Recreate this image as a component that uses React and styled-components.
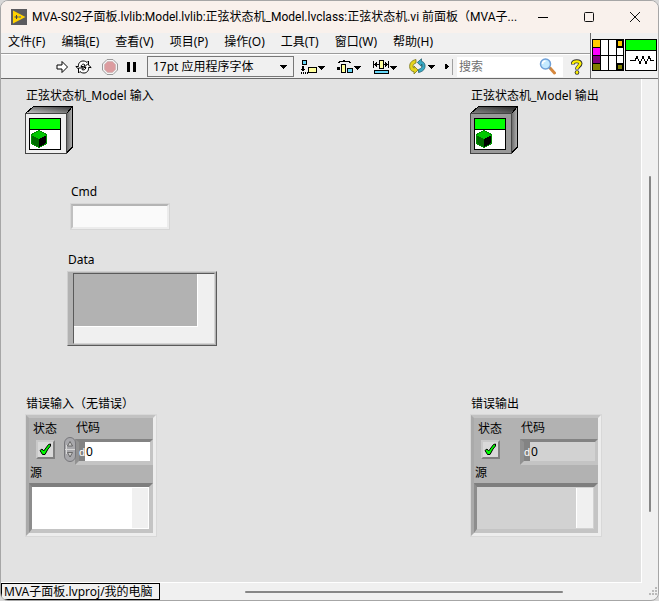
import React from "react";
import styled, { createGlobalStyle } from "styled-components";

const GlobalStyle = createGlobalStyle`
  *, *::before, *::after { box-sizing: border-box; }
  body { margin: 0; background: #d8d8d8; }
  body, button, input, select, textarea {
    font-family: "Noto Sans", "Noto Sans CJK SC", sans-serif;
    font-size: 12px;
    line-height: 18px;
    color: #000;
  }
  svg { display: block; flex: none; }
`;

/* ---------- window frame ---------- */

const Window = styled.div`
  display: flex;
  flex-direction: column;
  min-height: 100vh;
  border: 1px solid #a6a6a6;
  border-radius: 8px;
  background: #f0f0f0;
  overflow: hidden;
`;

const TitleBar = styled.header`
  display: flex;
  align-items: center;
  height: 32px;
  padding-left: 10px;
  background: #f9f1ec;
`;

const Title = styled.h1`
  flex: 1;
  min-width: 0;
  margin: 0 0 0 5px;
  font-family: Roboto, "Noto Sans CJK SC", sans-serif;
  font-size: 12px;
  font-weight: 400;
  white-space: nowrap;
  overflow: hidden;
`;

const CaptionButton = styled.button`
  display: flex;
  align-items: center;
  justify-content: center;
  width: 46px;
  height: 32px;
  padding: 0;
  border: 0;
  background: none;
`;

const Chrome = styled.div`
  display: flex;
  border-bottom: 1px solid #6a6a6a;
`;

const Bars = styled.div`
  flex: 1;
  min-width: 0;
`;

const MenuBar = styled.nav`
  display: flex;
  align-items: center;
  gap: 16px;
  height: 21px;
  padding: 0 7px 3px;
  border-bottom: 1px solid #9c9c9c;
`;

const MenuItem = styled.button`
  padding: 0;
  border: 0;
  background: none;
  white-space: nowrap;
`;

const ToolBar = styled.div`
  display: flex;
  align-items: center;
  height: 24px;
  padding-left: 54px;
  border-top: 1px solid #fff;
`;

const ToolButton = styled.button`
  display: flex;
  align-items: center;
  justify-content: center;
  flex: none;
  width: ${(p) => p.$width}px;
  height: 22px;
  padding: 0;
  border: 0;
  background: none;
`;

const FontBox = styled.div`
  display: grid;
  align-items: center;
  flex: none;
  width: 147px;
  height: 21px;
  margin: 0 3px 0 6px;
  border: 1px solid #777;
  background: #f0f0f0;

  > * { grid-area: 1 / 1; }
  > svg { justify-self: end; margin-right: 6px; pointer-events: none; }
`;

const FontSelect = styled.select`
  appearance: none;
  width: 100%;
  height: 19px;
  padding: 0 0 0 5px;
  border: 0;
  background: none;
`;

const Divider = styled.span`
  width: 1px;
  height: 16px;
  margin: 0 4px 0 1px;
  background: #a0a0a0;
`;

const SearchBox = styled.label`
  display: flex;
  align-items: center;
  flex: 1;
  min-width: 60px;
  height: 20px;
  padding: 0 6px 0 2px;
  background: #fff;
`;

const SearchInput = styled.input`
  flex: 1;
  min-width: 0;
  padding: 0;
  border: 0;
  outline: 0;
  background: none;
  &::placeholder { color: #6f6f6f; opacity: 1; }
`;

const IconPane = styled.div`
  display: flex;
  align-items: flex-end;
  gap: 1px;
  padding: 0 1px 7px 1px;
  border-left: 1px solid #6a6a6a;
`;

/* ---------- front panel ---------- */

const Workspace = styled.main`
  flex: 1;
  display: grid;
  grid-template-columns: 1fr 16px;
`;

const Canvas = styled.section`
  display: grid;
  grid-template-columns: 1fr 132px;
  align-content: start;
  padding: 8px 39px 24px 24px;
  border-right: 1px solid #fff;
  border-bottom: 1px solid #fff;
  background: #e2e2e2;
`;

const Item = styled.div`
  display: flex;
  flex-direction: column;
  align-items: flex-start;
  gap: ${(p) => p.$gap || 1}px;
  margin-top: ${(p) => p.$top || 0}px;
  margin-left: ${(p) => p.$indent || 0}px;
  grid-column: ${(p) => (p.$wide ? "1 / -1" : "auto")};
`;

const Caption = styled.label`
  padding-left: 1px;
  height: 18px;
  white-space: nowrap;
`;

const CmdInput = styled.input`
  width: 100px;
  height: 27px;
  padding: 0 4px;
  border: 3px solid;
  border-color: #b4b4b4 #ececec #ececec #c0c0c0;
  outline: 1px solid #d6d6d6;
  outline-offset: -1px;
  background: #fafafa;
`;

const DataFrame = styled.div`
  width: 150px;
  height: 75px;
  padding: 1px 1px 1px 5px;
  border: 1px solid;
  border-color: #cfcfcf #5a5a5a #5a5a5a #cfcfcf;
  background: #b2b2b2;
`;

const DataView = styled.div`
  height: 100%;
  padding: 0 16px 16px 0;
  border: 1px solid;
  border-color: #5a5a5a #d4d4d4 #d4d4d4 #5a5a5a;
  background: #f0f0f0;
`;

const DataArea = styled.div`
  height: 100%;
  border-right: 1px solid #fff;
  border-bottom: 1px solid #fff;
  background: #b2b2b2;
`;

const ClusterFrame = styled.fieldset`
  width: 132px;
  height: 123px;
  min-width: 0;
  margin: 0;
  padding: 0;
  border: 4px solid;
  border-color: #c2c2c2 #ededed #ededed #aaa;
  outline: 1px solid #d8d8d8;
  outline-offset: -1px;
  background: #b2b2b2;
`;

const ClusterRow = styled.div`
  display: flex;
  height: 48px;
  padding: 1px 0 0 4px;
`;

const StatusColumn = styled.div`
  display: flex;
  flex-direction: column;
  gap: 2px;
  width: 42px;
`;

const StatusLabel = styled.label`
  height: 18px;
  padding-top: 1px;
  white-space: nowrap;
`;

const CheckCell = styled.span`
  display: grid;
  place-items: center;
  width: 19px;
  height: 19px;
  margin: 1px 0 0 3px;

  > * { grid-area: 1 / 1; }
  > svg { pointer-events: none; }
`;

const CheckInput = styled.input`
  appearance: none;
  width: 19px;
  height: 19px;
  margin: 0;
  border: 2px solid;
  border-color: #c9c9c9 #808080 #808080 #c9c9c9;
  background: #d9d9d9;
`;

const CodeColumn = styled.div`
  display: flex;
  flex-direction: column;
  flex: 1;
  min-width: 0;
  gap: 2px;
`;

const CodeField = styled.div`
  display: flex;
  height: 26px;
  border: 4px solid;
  border-top-width: 3px;
  border-right-width: 3px;
  border-color: #838383 #c4c4c4 #c4c4c4 #919191;
`;

const Radix = styled.span`
  width: 6px;
  background: #838383;
  color: #fff;
  font-family: "Liberation Sans", sans-serif;
  font-size: 11px;
  line-height: 20px;
`;

const CodeInput = styled.input`
  flex: 1;
  min-width: 0;
  padding: 0 1px;
  border: 0;
  background: ${(p) => (p.$output ? "#d2d2d2" : "#fff")};
`;

const SpinColumn = styled.div`
  display: flex;
  align-items: flex-end;
  width: 13px;
  margin: 0 -2px 4px -11px;
  z-index: 1;
`;

const SpinButton = styled.button`
  width: 12px;
  height: 25px;
  padding: 0;
  border: 0;
  background: none;
`;

const SourceLabel = styled.label`
  display: block;
  height: 17px;
  padding-left: 1px;
  line-height: 14px;
`;

const SourceFrame = styled.div`
  display: flex;
  height: 50px;
  border: 4px solid;
  border-left-width: 3px;
  border-color: #7e7e7e #c4c4c4 #c4c4c4 #8d8d8d;
  background: ${(p) => (p.$output ? "#d2d2d2" : "#fff")};
`;

const SourceText = styled.textarea`
  flex: 1;
  min-width: 0;
  padding: 2px;
  border: 0;
  resize: none;
  background: none;
`;

const SourceScroll = styled.span`
  width: 17px;
  margin: 1px 1px 1px 0;
  border-left: 1px solid #fff;
  background: #f0f0f0;
`;

/* ---------- scroll bars and status ---------- */

const VerticalTrack = styled.div`
  display: flex;
  justify-content: center;
  padding: 97px 0 71px;
`;

const VerticalThumb = styled.span`
  width: 2px;
  border-radius: 1px;
  background: #868686;
`;

const Footer = styled.footer`
  display: flex;
  align-items: center;
  height: 17px;
`;

const ProjectLink = styled.button`
  width: 159px;
  height: 17px;
  padding: 0 2px;
  border: 1px solid #000;
  background: #f0f0f0;
  line-height: 14px;
  text-align: left;
  white-space: nowrap;
`;

const HorizontalTrack = styled.div`
  flex: 1;
  padding: 0 86px 0 85px;
`;

const HorizontalThumb = styled.span`
  display: block;
  height: 2px;
  border-radius: 1px;
  background: #868686;
`;

/* ---------- drawings ---------- */

const Pixels = ({ w, h, children }) => (
  <svg width={w} height={h} viewBox={`0 0 ${w} ${h}`} shapeRendering="crispEdges" aria-hidden="true">
    {children}
  </svg>
);

const AppIcon = () => (
  <svg width="16" height="16" viewBox="0 0 16 16" aria-hidden="true">
    <path fill="#5b5b5f" d="M0 0h16v16H0z" />
    <path fill="#ffd200" d="M2 1.5 14.5 8 2 14.5z" />
    <path stroke="#444" d="M3.5 8h4M5.5 6v4" />
    <path stroke="#2b63b8" d="M8 8h2" />
  </svg>
);

const RunIcon = () => (
  <svg width="13" height="14" viewBox="0 0 13 14" aria-hidden="true">
    <path fill="#fff" stroke="#000" d="M1 5h5V1.500L11.500 7 6 12.500V9H1z" />
  </svg>
);

const RunLoopIcon = () => (
  <svg width="17" height="14" viewBox="0 0 17 14" fill="#fff" stroke="#000" aria-hidden="true">
    <path d="M3.500 6.500C3 3 5.500 1 8 1c2 0 3 .5 4 1.500L13.500 1v6H8.500L10 5C9 3.500 6.500 4 6 6.500h2L4.500 10 .8 6.500z" />
    <path d="M13.500 7.500C14 11 11.500 13 9 13c-2 0-3-.5-4-1.500L3.500 13V8H8.500L7 9.500C8 10.500 10.500 10 11 7.500H9L12.500 4l3.700 3.500z" />
  </svg>
);

const AbortIcon = () => (
  <svg width="16" height="16" viewBox="0 0 16 16" aria-hidden="true">
    <path fill="#f4f4f4" stroke="#999" d="M5 .5h6L15.500 5v6L11 15.500H5L.5 11V5z" />
    <path fill="#dc9c9f" stroke="#c8b0b0" strokeWidth=".6" d="M5.600 2.500h4.800l3.100 3.100v4.800l-3.100 3.100H5.600l-3.100-3.100V5.600z" />
  </svg>
);

const PauseIcon = () => (
  <Pixels w={9} h={10}><path d="M0 0h3v10H0zM6 0h3v10H6z" /></Pixels>
);

const Down = ({ x = 0, y = 0 }) => <path d={`M${x} ${y}h7v1h-1v1h-1v1h-1v1h-1v-1h-1v-1h-1v-1h-1z`} />;

const AlignIcon = () => (
  <Pixels w={24} h={14}>
    <path d="M1 0h5v5H1zM1 6h2v2H1zM1 8h2v2H1zM0 9h4v1H0zM1 10h2v1H1zM0 12h1v2H0zM2 12h1v2H2zM4 12h1v2H4zM6 12h1v2H6zM7 7h9v6H7z" />
    <path fill="#65d5f5" d="M2 1h3v3H2z" /><path fill="#ffff9c" d="M8 8h7v4H8z" />
    <Down x={17} y={6} />
  </Pixels>
);

const DistributeIcon = () => (
  <Pixels w={24} h={14}>
    <path d="M1 2h1V1h4V0h2v1h5v1h1v1h-2V2H3v1H1zM0 7h3v3H0zM4 4h5v9H4zM10 8h6v5h-6z" />
    <path fill="#ffff9c" d="M5 5h3v7H5z" /><path fill="#65d5f5" d="M11 9h4v3h-4z" />
    <Down x={17} y={6} />
  </Pixels>
);

const ResizeIcon = () => (
  <Pixels w={24} h={14}>
    <path d="M0 1h1v7H0zM15 1h1v7h-1zM1 4h5v1H1zM3 2h1v5H3zM2 3h1v3H2zM6 0h5v9H6zM11 4h4v1h-4zM12 2h1v5h-1zM13 3h1v3h-1zM1 10h15v4H1z" />
    <path fill="#ffff9c" d="M7 1h3v7H7z" /><path fill="#65d5f5" d="M2 11h13v2H2z" />
    <Down x={17} y={6} />
  </Pixels>
);

const ReorderIcon = () => (
  <svg width="26" height="17" viewBox="0 0 26 17" aria-hidden="true">
    <path fill="#e5d51c" stroke="#77751d" strokeWidth=".8" d="M7 1.500C2 2.500 0 6 .8 10c.5 2.200 2 3.500 4.200 3.700V16l4-4-4-4v2.200C3.500 9 3.500 6 7 5z" />
    <path fill="#39a9c5" stroke="#24616f" strokeWidth=".8" d="M9.500 14.500c5-1 7-4 6.500-7.500-.4-2-1.700-3.300-3.500-3.700V.8l-4.200 3.700 4.200 4V6c1.700 1.800.5 4.300-3 5.500z" />
    <g shapeRendering="crispEdges"><Down x={19} y={7} /></g>
  </svg>
);

const MoreIcon = () => <Pixels w={4} h={7}><path d="M0 1h1v5H0zM1 1h1v1h1v1h1v1H3v1H2v1H1z" /></Pixels>;

const SearchIcon = () => (
  <svg width="18" height="17" viewBox="0 0 18 17" aria-hidden="true">
    <path stroke="#d6883e" strokeWidth="3" strokeLinecap="round" d="m11 10 4.500 5" />
    <path stroke="#888" strokeWidth="1.500" d="m9.500 9 2 2" />
    <circle cx="6.500" cy="6" r="5" fill="#c4eaff" stroke="#6fa0d8" strokeWidth="1.500" />
    <path fill="none" stroke="#fff" strokeWidth="1.500" d="M3.500 6c0-2 1.500-3 3-3" />
  </svg>
);

const HelpIcon = () => (
  <svg width="12" height="16" viewBox="0 0 12 16" aria-hidden="true">
    <path fill="none" stroke="#333" strokeWidth="4" d="M2 5.500V4c1-2.500 7-2.500 7.500.5C9.500 7 6 7 6 10.500" />
    <circle cx="6" cy="13.500" r="2.300" fill="#333" />
    <path fill="none" stroke="#fff200" strokeWidth="2.400" d="M2 5V4c1-2.300 7-2.300 7.300.5C9.300 6.700 6 7 6 10" />
    <circle cx="6" cy="13.500" r="1.400" fill="#fff200" />
  </svg>
);

const ConnectorPane = () => (
  <Pixels w={32} h={32}>
    <path d="M0 0h32v32H0z" />
    <path fill="#fff" d="M9 1h7v15H9zM17 1h7v15h-7zM9 17h7v14H9zM17 17h7v14h-7zM25 9h6v7h-6zM25 17h6v7h-6z" />
    <path fill="#ffcb00" d="M1 1h7v7H1zM26 2h4v5h-4z" />
    <path fill="#f0f" d="M1 9h7v7H1z" />
    <path fill="#800080" d="M1 17h7v7H1z" />
    <path fill="#808000" d="M1 25h7v6H1zM26 26h4v4h-4z" />
  </Pixels>
);

const ViIcon = () => (
  <Pixels w={32} h={32}>
    <path d="M0 0h32v32H0z" />
    <path fill="#0f0" d="M1 1h30v10H1z" />
    <path fill="#fff" d="M1 12h30v19H1z" />
    <path fill="none" stroke="#000" d="M5 21.500h5l2-4 3 7 3-7 3 7 3-7 2 4h3" />
  </Pixels>
);

const ClassObject = ({ id, face, lid, edge }) => (
  <Pixels w={48} h={48}>
    <defs>
      <linearGradient id={`${id}-top`} x1="0" x2="1" y1="1" y2="0">
        <stop offset="0" stopColor={lid} /><stop offset="1" stopColor={edge} />
      </linearGradient>
      <linearGradient id={`${id}-side`} x1="0" x2="1" y1="0" y2="0">
        <stop offset="0" stopColor="#666" /><stop offset="1" stopColor="#b5b5b5" />
      </linearGradient>
    </defs>
    <path fill={`url(#${id}-top)`} stroke="#000" d="M.5 7.500 8.500.5h39l-6 7z" />
    <path fill={`url(#${id}-side)`} stroke="#000" d="M41.500 7.500 47.500.5V41l-6 6z" />
    <path fill={face} stroke="#444" d="M.5 7.500h41v39.500H.5z" />
    <path d="M4 12h32v32H4z" />
    <path fill="#0f0" d="M5 13h30v10H5z" />
    <path fill="#fff" d="M5 24h30v19H5z" />
    <path fill="#00c800" d="m14 24 8 4v2l-8 3-8-3v-2z" />
    <path fill="#006a00" d="m6 29 8 4v9l-8-4z" />
    <path d="m14 33 8-4v9l-8 4z" />
    <path fill="none" stroke="#009000" d="m14 24.500-7.500 4v9l7.500 4 7.500-4v-9z" />
  </Pixels>
);

const CheckIcon = () => (
  <svg width="13" height="13" viewBox="0 0 13 13" aria-hidden="true">
    <path fill="#0f0" stroke="#000" strokeLinejoin="round" d="M1 7.500 3 6l1.700 2L9.500 1.500 11.500 1v2L9 6l-3 5.500H3.500z" />
  </svg>
);

const SpinIcon = () => (
  <svg width="12" height="25" viewBox="0 0 12 25" aria-hidden="true">
    <rect x=".5" y=".5" width="11" height="24" rx="5.500" fill="#a8a8ac" stroke="#77777b" />
    <path stroke="#d8d8d8" d="M2.500 8v9M1 12.500h10" />
    <path fill="#ccc" stroke="#555" strokeWidth=".8" d="M3.500 9 6 4.500 8.500 9zM3.500 15.500h5L6 20z" />
  </svg>
);

const GripIcon = () => (
  <Pixels w={9} h={9}>
    <path fill="#bababa" d="M6 0h2v2H6zM3 3h2v2H3zM6 3h2v2H6zM0 6h2v2H0zM3 6h2v2H3zM6 6h2v2H6z" />
  </Pixels>
);

/* ---------- composed parts ---------- */

function ErrorCluster({ id, title, output }) {
  return (
    <Item $top={49}>
      <Caption as="span" id={`${id}-title`}>{title}</Caption>
      <ClusterFrame aria-labelledby={`${id}-title`}>
        <ClusterRow>
          <StatusColumn>
            <StatusLabel htmlFor={`${id}-status`}>状态</StatusLabel>
            <CheckCell>
              <CheckInput type="checkbox" id={`${id}-status`} defaultChecked disabled={output} />
              <CheckIcon />
            </CheckCell>
          </StatusColumn>
          {!output && (
            <SpinColumn><SpinButton aria-label="调整代码"><SpinIcon /></SpinButton></SpinColumn>
          )}
          <CodeColumn>
            <Caption htmlFor={`${id}-code`}>代码</Caption>
            <CodeField>
              <Radix>d</Radix>
              <CodeInput id={`${id}-code`} defaultValue="0" readOnly={output} $output={output} />
            </CodeField>
          </CodeColumn>
        </ClusterRow>
        <SourceLabel htmlFor={`${id}-source`}>源</SourceLabel>
        <SourceFrame $output={output}>
          <SourceText id={`${id}-source`} readOnly={output} />
          <SourceScroll />
        </SourceFrame>
      </ClusterFrame>
    </Item>
  );
}

const MENUS = ["文件(F)", "编辑(E)", "查看(V)", "项目(P)", "操作(O)", "工具(T)", "窗口(W)", "帮助(H)"];

export default function App() {
  return (
    <>
      <GlobalStyle />
      <Window>
        <TitleBar>
          <AppIcon />
          <Title>MVA-S02子面板.lvlib:Model.lvlib:正弦状态机_Model.lvclass:正弦状态机.vi 前面板（MVA子...</Title>
          <CaptionButton aria-label="最小化"><Pixels w={10} h={10}><path d="M0 5h10v1H0z" /></Pixels></CaptionButton>
          <CaptionButton aria-label="最大化">
            <svg width="10" height="10" viewBox="0 0 10 10"><rect x=".5" y=".5" width="9" height="9" rx="1" fill="none" stroke="#111" /></svg>
          </CaptionButton>
          <CaptionButton aria-label="关闭">
            <svg width="10" height="10" viewBox="0 0 10 10"><path stroke="#111" d="m0 0 10 10M10 0 0 10" /></svg>
          </CaptionButton>
        </TitleBar>

        <Chrome>
          <Bars>
            <MenuBar>{MENUS.map((m) => <MenuItem key={m}>{m}</MenuItem>)}</MenuBar>
            <ToolBar>
              <ToolButton $width={15} aria-label="运行"><RunIcon /></ToolButton>
              <ToolButton $width={27} aria-label="连续运行"><RunLoopIcon /></ToolButton>
              <ToolButton $width={25} aria-label="中止"><AbortIcon /></ToolButton>
              <ToolButton $width={19} aria-label="暂停"><PauseIcon /></ToolButton>
              <FontBox>
                <FontSelect aria-label="字体"><option>17pt 应用程序字体</option></FontSelect>
                <Pixels w={7} h={4}><Down /></Pixels>
              </FontBox>
              <ToolButton $width={32} aria-label="对齐对象"><AlignIcon /></ToolButton>
              <ToolButton $width={40} aria-label="分布对象"><DistributeIcon /></ToolButton>
              <ToolButton $width={32} aria-label="调整对象大小"><ResizeIcon /></ToolButton>
              <ToolButton $width={42} aria-label="重新排序"><ReorderIcon /></ToolButton>
              <ToolButton $width={8} aria-label="更多"><MoreIcon /></ToolButton>
              <Divider />
              <SearchBox>
                <SearchInput placeholder="搜索" aria-label="搜索" />
                <SearchIcon />
              </SearchBox>
              <ToolButton $width={27} aria-label="帮助"><HelpIcon /></ToolButton>
            </ToolBar>
          </Bars>
          <IconPane><ConnectorPane /><ViIcon /></IconPane>
        </Chrome>

        <Workspace>
          <Canvas>
            <Item>
              <Caption as="span">正弦状态机_Model 输入</Caption>
              <ClassObject id="object-in" face="#efefef" lid="#c8c8c8" edge="#333" />
            </Item>
            <Item>
              <Caption as="span">正弦状态机_Model 输出</Caption>
              <ClassObject id="object-out" face="#999" lid="#888" edge="#222" />
            </Item>
            <Item $wide $top={29} $indent={45} $gap={2}>
              <Caption htmlFor="cmd">Cmd</Caption>
              <CmdInput id="cmd" />
            </Item>
            <Item $wide $top={21} $indent={42} $gap={2}>
              <Caption as="span">Data</Caption>
              <DataFrame><DataView><DataArea /></DataView></DataFrame>
            </Item>
            <ErrorCluster id="error-in" title="错误输入（无错误）" output={false} />
            <ErrorCluster id="error-out" title="错误输出" output />
          </Canvas>
          <VerticalTrack><VerticalThumb /></VerticalTrack>
        </Workspace>

        <Footer>
          <ProjectLink>MVA子面板.lvproj/我的电脑</ProjectLink>
          <HorizontalTrack><HorizontalThumb /></HorizontalTrack>
          <GripIcon />
        </Footer>
      </Window>
    </>
  );
}
